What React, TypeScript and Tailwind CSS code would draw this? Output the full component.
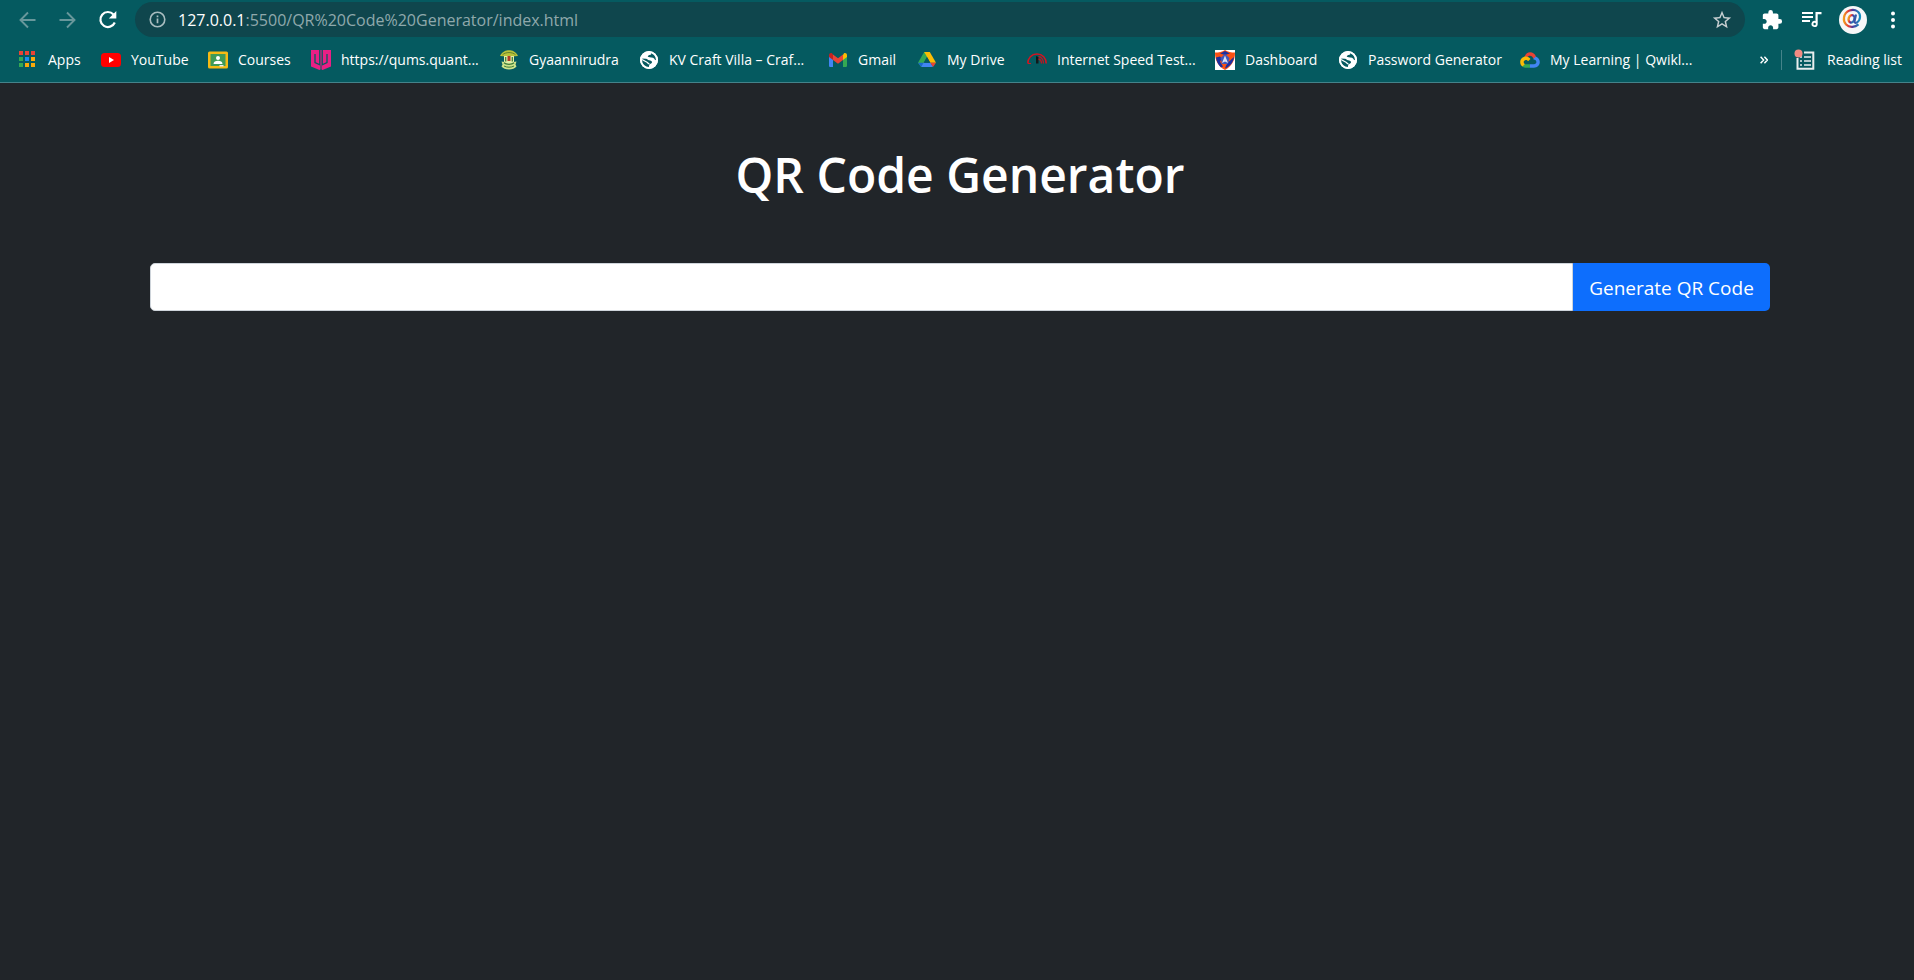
import { ReactNode } from "react";

function GlobeIcon() {
  return (
    <svg viewBox="0 0 20 20" className="size-5">
      <circle cx="10" cy="10" r="9" fill="#fff" />
      <path d="M2.600 8.500l4.400.2c1.500.1 1.600 1.500 3 1.600 1.800.2 3.200.8 3 2.200-.3 1.400-2.500 1.300-2.800 2.500l-.4 2.500C5.300 17.300 2.200 13.500 2.600 8.500z" fill="#065a60" />
      <path d="M3 9.500l5 2.800c1 .6 1 1.500 2.500 1.500" fill="none" stroke="#fff" strokeWidth="1.200" />
      <path d="M8.500 3l3.300-.3.4 1.800-2.600.8-.9 1.500 2 .4 3.300.5c1.300.2 1.300 1.900 2.400 2.300l1.200.2c.1-3.300-1.700-6.200-5-7.200l-2.200-.3z" fill="#065a60" />
      <circle cx="10" cy="10" r="8" fill="none" stroke="#fff" strokeWidth="2" />
    </svg>
  );
}

const appColors = ["#ea4335", "#ea4335", "#ea4335", "#34a853", "#1a8cf0", "#fba90a", "#34a853", "#fba90a", "#fba90a"];

const bookmarks: { label: string; width: string; icon: ReactNode }[] = [
  {
    label: "Apps",
    width: "w-[83px]",
    icon: (
      <svg viewBox="0 0 20 20" className="size-5">
        {appColors.map((c, i) => (
          <rect key={i} x={1 + (i % 3) * 6} y={1 + Math.floor(i / 3) * 6} width="4" height="4" fill={c} />
        ))}
      </svg>
    ),
  },
  {
    label: "YouTube",
    width: "w-[107px]",
    icon: (
      <svg viewBox="0 0 20 20" className="size-5">
        <rect x="0" y="3" width="20" height="14" rx="3.5" fill="#f00" />
        <path d="M8 7l5 3-5 3z" fill="#fff" />
      </svg>
    ),
  },
  {
    label: "Courses",
    width: "w-[103px]",
    icon: (
      <svg viewBox="0 0 20 20" className="size-5">
        <rect x="0" y="1.5" width="20" height="17" rx="1.5" fill="#f5ba14" />
        <rect x="2.5" y="4" width="15" height="12" fill="#3f9a58" />
        <circle cx="10" cy="8" r="2" fill="#fff" />
        <path d="M5.500 14c0-2.200 2-3.200 4.500-3.200s4.500 1 4.500 3.200z" fill="#fff" />
        <rect x="11.5" y="15" width="4" height="1.5" fill="#e8eaed" />
      </svg>
    ),
  },
  {
    label: "https://qums.quant...",
    width: "w-[188px]",
    icon: (
      <svg viewBox="0 0 20 20" className="size-5">
        <path d="M0 0h20v16.500L11.500 20 10 19.300 8.500 20 0 16.500z" fill="#ea1f85" />
        <path d="M4 4v8.500l4.800 2.300V0M16 4v8.500l-4.800 2.300V0" fill="none" stroke="#065a60" strokeWidth="1.300" />
        <path d="M10 15.500V20" stroke="#065a60" />
      </svg>
    ),
  },
  {
    label: "Gyaannirudra",
    width: "w-[140px]",
    icon: (
      <svg viewBox="0 0 20 20" className="size-5">
        <path d="M1 6C3 1.500 7 .3 10 .3S17 1.500 19 6l-3 .3H4z" fill="#b9c23a" />
        <path d="M3.500 4.800c3-3 10-3 13 0" fill="none" stroke="#5a7a2c" strokeWidth=".9" />
        <path d="M5 6h10v6.500L10 15l-5-2.500z" fill="#e4efa6" />
        <path d="M2.500 11.500l3 .5c1 2 8 2 9 0l3-.5-1 3 1 2c-3 4-12 4-15 0l1-2z" fill="#cfe38a" />
        <path d="M5 12.800c2 2 8 2 10 0M6.700 7v4.500M13.300 7v4.500" fill="none" stroke="#3f7d3c" strokeWidth="1.300" />
        <path d="M5 16c2.500 1.600 7.500 1.600 10 0" fill="none" stroke="#3f7d3c" />
        <rect x="8.5" y="6" width="3" height="5" fill="#b23b24" />
      </svg>
    ),
  },
  { label: "KV Craft Villa – Craf...", width: "w-[189px]", icon: <GlobeIcon /> },
  {
    label: "Gmail",
    width: "w-[89px]",
    icon: (
      <svg viewBox="0 0 20 20" className="size-5">
        <path d="M1 6v9.700c0 .7.600 1.300 1.300 1.300H5V9z" fill="#4285f4" />
        <path d="M15 9v8h2.700c.7 0 1.300-.6 1.300-1.300V6z" fill="#34a853" />
        <path d="M15 5v5l4-3V5.200c0-1.900-2-2.700-3.200-1.700z" fill="#fbbc04" />
        <path d="M5 10V4.500l5 3.800 5-3.800V10l-5 3.800z" fill="#ea4335" />
        <path d="M1 5.200V7l4 3V4.500l-.8-1C3 2.500 1 3.300 1 5.200z" fill="#c5221f" />
      </svg>
    ),
  },
  {
    label: "My Drive",
    width: "w-[110px]",
    icon: (
      <svg viewBox="0 0 20 20" className="size-5">
        <path d="M7.200 2h5.600L4.200 17 1 12.800z" fill="#34a853" />
        <path d="M7.200 2h5.600L19 12.800h-5.600z" fill="#fbbc04" />
        <path d="M1 12.800h5.500L4.200 17z" fill="#1967d2" />
        <path d="M6.500 12.800h7L16 17H4.200z" fill="#4285f4" />
        <path d="M13.400 12.800H19L16 17z" fill="#ea4335" />
        <path d="M10 7.200l3 5.600H7z" fill="#065a60" />
      </svg>
    ),
  },
  {
    label: "Internet Speed Test...",
    width: "w-[188px]",
    icon: (
      <svg viewBox="0 0 20 20" className="size-5">
        <path d="M.8 13.500C.8 8 4.500 4 10 4s9.200 4 9.200 9.500" fill="none" stroke="#d8121f" strokeWidth="1.500" />
        <path d="M1 13.500h3" stroke="#d8121f" />
        <path d="M9 6l2.500 1v6.500H9z" fill="#10191b" />
        <path d="M11.500 6.500c3 .5 5 3.500 5 7M11.500 9c1.800.5 3 2.500 3 4.500" fill="none" stroke="#c3141f" strokeWidth="1.300" />
      </svg>
    ),
  },
  {
    label: "Dashboard",
    width: "w-[123px]",
    icon: (
      <svg viewBox="0 0 20 20" className="size-5">
        <rect width="20" height="20" fill="#fff" />
        <path d="M0 2.500c4 0 7-.5 10-2.500 3 2 6 2.500 10 2.500 0 8-3 13.500-10 17.500C3 16 0 10.500 0 2.500z" fill="#fb5012" />
        <path d="M5 3.500L10 1l5 2.500-5 1.500z" fill="#1c2fa0" />
        <path d="M1 7.500l4-1 2 2-2 3 3 5-2 1C3.500 15 1.500 12 1 7.500z" fill="#1c2fa0" />
        <path d="M10 18.500l1-3 3-4 5-4.500c-.5 5-4 9.500-9 11.500z" fill="#1c2fa0" />
        <path d="M10 4l4.500 4-1.500 6h-6L5.500 8z" fill="#3f58bb" />
        <path d="M10 5.500L13 13l-3-1.500L7 13z" fill="#dfe3f6" />
      </svg>
    ),
  },
  { label: "Password Generator", width: "w-[182px]", icon: <GlobeIcon /> },
  {
    label: "My Learning | Qwikl...",
    width: "w-[190px]",
    icon: (
      <svg viewBox="0 0 20 20" className="size-5">
        <path d="M4.500 7C5.500 3.500 8 2.300 10 2.300c2.800 0 5 1.500 6 4.500l-2.500 2C12.800 6.500 11.500 5.700 10 5.700c-1.200 0-2.200.5-3 1.600z" fill="#ea4335" />
        <path d="M15.800 6.500c2.500 1 4 3 4 5.500 0 3.300-2.500 5.700-5.800 5.700h-4v-3.500h4c1.500 0 2.400-1 2.400-2.200s-1-2.300-2.900-2.500V8.500z" fill="#4285f4" />
        <path d="M10 14.200v3.500H6c-1.500 0-2.700-.4-3.700-1.200l2.500-2.600c.4.200.8.300 1.300.3z" fill="#34a853" />
        <path d="M2.600 16.600C1 15.600.2 13.900.2 12c0-3.300 2.600-5.600 5.700-5.600 2 0 3.600.9 4.600 2.500L8 11.300c-.4-.9-1.200-1.400-2.100-1.400-1.300 0-2.200 1-2.200 2.100 0 .9.500 1.600 1.300 2z" fill="#fbbc04" />
      </svg>
    ),
  },
];

export default function App() {
  return (
    <div className="flex min-h-screen flex-col bg-[#212529] font-['Open_Sans','Noto_Sans',sans-serif] text-white">
      <header className="border-b border-[#45838a] bg-[#055a60]">
        <div className="flex h-[39px] items-center pr-[9px] pl-4">
          <nav aria-label="History" className="flex items-center gap-4">
            <button type="button" aria-label="Back">
              <svg viewBox="0 0 24 24" className="size-6" fill="none" stroke="#68979b" strokeWidth="1.900">
                <path d="M19.500 12H4.500M12 4.500L4.500 12l7.500 7.500" />
              </svg>
            </button>
            <button type="button" aria-label="Forward">
              <svg viewBox="0 0 24 24" className="size-6" fill="none" stroke="#68979b" strokeWidth="1.900">
                <path d="M3.500 12h15M11 4.500l7.500 7.500-7.500 7.500" />
              </svg>
            </button>
            <button type="button" aria-label="Reload">
              <svg viewBox="0 0 24 24" className="size-6">
                <path d="M17.500 6.500a7.500 7.500 0 1 0 1.300 8" fill="none" stroke="#fff" strokeWidth="2.200" />
                <path d="M20.300 3v7.500h-7.500z" fill="#fff" />
              </svg>
            </button>
          </nav>
          <div className="ml-[15px] flex h-[35px] flex-1 items-center rounded-full bg-[#0f464d] pr-3 pl-[14px]">
            <svg viewBox="0 0 18 18" className="size-[17px] shrink-0">
              <circle cx="9" cy="9" r="7.700" fill="none" stroke="#a9bdc0" strokeWidth="1.700" />
              <path d="M9 8v5M9 4.800v1.800" stroke="#a9bdc0" strokeWidth="1.800" />
            </svg>
            <p className="ml-3 flex-1 text-[16px] leading-6 text-[#8fa9ac]">
              <span className="text-white">127.0.0.1</span>:5500/QR%20Code%20Generator/index.html
            </p>
            <button type="button" aria-label="Bookmark this page">
              <svg viewBox="0 0 24 24" className="size-[22px]" fill="#c7cfd1">
                <path d="M22 9.240l-7.190-.62L12 2 9.190 8.630 2 9.240l5.460 4.730L5.820 21 12 17.270 18.180 21l-1.630-7.030L22 9.240zM12 15.400l-3.760 2.270 1-4.280-3.320-2.880 4.380-.38L12 6.100l1.710 4.040 4.380.38-3.320 2.880 1 4.280L12 15.400z" />
              </svg>
            </button>
          </div>
          <div className="ml-4 flex items-center">
            <button type="button" aria-label="Extensions">
              <svg viewBox="0 0 24 24" className="size-[22px]" fill="#fff">
                <path d="M20.500 11H19V7c0-1.100-.9-2-2-2h-4V3.500a2.500 2.500 0 0 0-5 0V5H4c-1.100 0-2 .9-2 2v3.800h1.500c1.500 0 2.700 1.200 2.700 2.700s-1.200 2.700-2.700 2.700H2V20c0 1.100.9 2 2 2h3.800v-1.500c0-1.500 1.200-2.700 2.700-2.700s2.700 1.200 2.700 2.700V22H17c1.100 0 2-.9 2-2v-4h1.500a2.500 2.500 0 0 0 0-5z" />
              </svg>
            </button>
            <button type="button" aria-label="Media controls" className="ml-4">
              <svg viewBox="0 0 24 24" className="size-6" fill="#fff">
                <path d="M3 4h11v2H3zM3 8h11v2H3zM3 12h8v2H3zM16.500 4h6v2.200h-3.800V16a3.100 3.100 0 1 1-2.200-3z" />
                <circle cx="15.600" cy="16" r="1.200" fill="#055a60" />
              </svg>
            </button>
            <button type="button" aria-label="Profile" className="ml-4">
              <svg viewBox="0 0 28 28" className="size-7">
                <defs>
                  <linearGradient id="at" x1="0" y1="0" x2="1" y2="0">
                    <stop offset="0" stopColor="#f39a1f" />
                    <stop offset=".3" stopColor="#e0353c" />
                    <stop offset=".55" stopColor="#4b3a9c" />
                    <stop offset="1" stopColor="#1490c0" />
                  </linearGradient>
                </defs>
                <circle cx="14" cy="14" r="14" fill="#f7f7f8" />
                <ellipse cx="12.500" cy="12.800" rx="2.900" ry="3.800" transform="rotate(20 12.500 12.800)" fill="none" stroke="url(#at)" strokeWidth="2.300" />
                <path d="M17 8.500l-1.500 6.700c-.3 1.800 1.200 2.100 2.600 1.200 3.600-2.400 4-8.300.6-10.900C14 2 6 4.500 5 11.500c-.9 6 3.500 9.700 8.500 9.300 2.500-.2 4.500-1.200 6-2.500" fill="none" stroke="url(#at)" strokeWidth="2.200" />
              </svg>
            </button>
            <button type="button" aria-label="Menu" className="ml-[14px]">
              <svg viewBox="0 0 24 24" className="size-6" fill="#fff">
                <circle cx="12" cy="5.500" r="2" />
                <circle cx="12" cy="12" r="2" />
                <circle cx="12" cy="18.500" r="2" />
              </svg>
            </button>
          </div>
        </div>
        <div className="flex h-[43px] items-center pr-3 pb-[2px] pl-[18px] text-[14px] leading-5 whitespace-nowrap">
          {bookmarks.map((b) => (
            <a key={b.label} href="#" className={`flex shrink-0 items-center gap-[10px] ${b.width}`}>
              <span className="size-5 shrink-0">{b.icon}</span>
              {b.label}
            </a>
          ))}
          <button type="button" aria-label="More bookmarks" className="ml-auto">
            <svg viewBox="0 0 8 8" className="size-2" fill="none" stroke="#fff" strokeWidth="1.500">
              <path d="M.6.800L3.600 4l-3 3.200M4.400.800l3 3.200-3 3.200" />
            </svg>
          </button>
          <span className="ml-[13px] h-5 w-px bg-[#45838a]" />
          <button type="button" className="ml-3 flex items-center gap-[11px]">
            <svg viewBox="0 0 22 22" className="size-[22px]">
              <path d="M3.500 9v10.800h15.800V3.500H10" fill="none" stroke="#e9eeee" strokeWidth="2" />
              <path d="M6 8h2M10 8h7M6 12h2M10 12h7M6 16h2M10 16h7" stroke="#e9eeee" strokeWidth="1.700" />
              <circle cx="4.500" cy="4.500" r="4" fill="#f28b82" />
            </svg>
            Reading list
          </button>
        </div>
      </header>
      <main className="flex flex-1 flex-col pt-[62px] pr-36 pl-[150px]">
        <h1 className="text-center text-[48px] leading-[60px] font-semibold">QR Code Generator</h1>
        <form className="mt-[58px] flex h-12" onSubmit={(e) => e.preventDefault()}>
          <input
            type="text"
            aria-label="Text to encode"
            className="min-w-0 flex-1 rounded-l-[5px] border border-[#ced4da] bg-white px-4 text-[19px] text-[#212529]"
          />
          <button type="submit" className="w-[197px] rounded-r-[5px] bg-[#0d6efd] pt-[2px] text-[19px]">
            Generate QR Code
          </button>
        </form>
      </main>
    </div>
  );
}
